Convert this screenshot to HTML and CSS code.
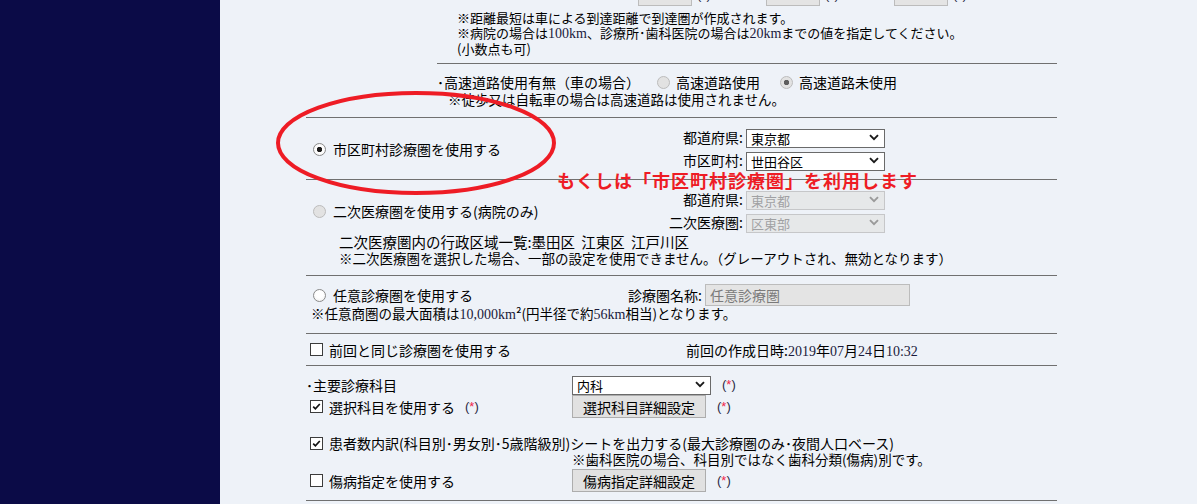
FILE: index.html
```html
<!DOCTYPE html>
<html lang="ja">
<head>
  <meta charset="UTF-8" />
  <title>診療圏設定</title>
  <link rel="stylesheet" href="styles.css">
</head>
<body>
  <div class="page">
    <nav class="sidebar"></nav>

    <main class="content">
      <div class="form">

        <!-- 到達距離 -->
        <div class="block sub">
          <div class="dist-row">
            <span class="dist-item"><span class="box"></span><span class="req">(<b>*</b>)</span></span>
            <span class="dist-item"><span class="box"></span><span class="req">(<b>*</b>)</span></span>
            <span class="dist-item"><span class="box"></span><span class="req">(<b>*</b>)</span></span>
          </div>
          <div class="notes">
            <p>※距離最短は車による到達距離で到達圏が作成されます。</p>
            <p>※病院の場合は<span class="num">100km</span>、診療所･歯科医院の場合は<span class="num">20km</span>までの値を指定してください。</p>
            <p>(小数点も可)</p>
          </div>
        </div>

        <div class="block highway">
          <div class="hw-row">
            <span class="hw-title">･高速道路使用有無（車の場合）</span>
            <label class="opt"><span class="radio disabled"></span>高速道路使用</label>
            <label class="opt opt-next"><span class="radio disabled checked"></span>高速道路未使用</label>
          </div>
          <p class="hw-note">※徒歩又は自転車の場合は高速道路は使用されません。</p>
        </div>

        <!-- 市区町村診療圏 -->
        <div class="block area">
          <div class="area-row">
            <label class="choice"><span class="radio checked"></span>市区町村診療圏を使用する</label>
            <div class="fields">
              <label>都道府県:</label>
              <div class="select">
                <select><option>東京都</option></select>
                <svg class="chev" viewBox="0 0 10 7"><path d="M1 1.2 L5 5.2 L9 1.2" /></svg>
              </div>
              <label>市区町村:</label>
              <div class="select">
                <select><option>世田谷区</option></select>
                <svg class="chev" viewBox="0 0 10 7"><path d="M1 1.2 L5 5.2 L9 1.2" /></svg>
              </div>
            </div>
          </div>
        </div>

        <!-- 二次医療圏 -->
        <div class="block area area-second">
          <div class="area-row">
            <label class="choice"><span class="radio disabled"></span>二次医療圏を使用する(病院のみ)</label>
            <div class="fields">
              <label>都道府県:</label>
              <div class="select disabled">
                <select disabled><option>東京都</option></select>
                <svg class="chev" viewBox="0 0 10 7"><path d="M1 1.2 L5 5.2 L9 1.2" /></svg>
              </div>
              <label>二次医療圏:</label>
              <div class="select disabled">
                <select disabled><option>区東部</option></select>
                <svg class="chev" viewBox="0 0 10 7"><path d="M1 1.2 L5 5.2 L9 1.2" /></svg>
              </div>
            </div>
          </div>
          <div class="area-notes">
            <p class="area-list">二次医療圏内の行政区域一覧:墨田区 江東区 江戸川区</p>
            <p>※二次医療圏を選択した場合、一部の設定を使用できません。（グレーアウトされ、無効となります）</p>
          </div>
        </div>

        <!-- 任意診療圏 -->
        <div class="block area-any">
          <div class="any-row">
            <label class="choice"><span class="radio"></span>任意診療圏を使用する</label>
            <label class="any-label">診療圏名称:</label>
            <input type="text" class="any-input" value="任意診療圏" disabled>
          </div>
          <p class="any-note">※任意商圏の最大面積は<span class="num">10,000km</span>²(円半径で約<span class="num">56km</span>相当)となります。</p>
        </div>

        <div class="block prev">
          <label class="check-choice"><span class="check"></span>前回と同じ診療圏を使用する</label>
          <span>前回の作成日時:<span class="num">2019</span>年<span class="num">07</span>月<span class="num">24</span>日<span class="num">10:32</span></span>
        </div>

        <!-- 診療科目 -->
        <div class="block subjects">
          <div class="row row-select">
            <span class="row-left">･主要診療科目</span>
            <div class="select">
              <select><option>内科</option></select>
              <svg class="chev" viewBox="0 0 10 7"><path d="M1 1.2 L5 5.2 L9 1.2" /></svg>
            </div>
            <span class="req req-side">(<b>*</b>)</span>
          </div>
          <div class="row row-button">
            <span class="row-left">
              <span class="check checked"><svg viewBox="0 0 13 13"><path d="M2.6 6.6 L5.2 9.3 L10.4 3.6" /></svg></span>選択科目を使用する<span class="req req-inline">(<b>*</b>)</span>
            </span>
            <button>選択科目詳細設定</button>
            <span class="req req-btn">(<b>*</b>)</span>
          </div>
          <div class="row row-text">
            <span class="check checked"><svg viewBox="0 0 13 13"><path d="M2.6 6.6 L5.2 9.3 L10.4 3.6" /></svg></span>患者数内訳(科目別･男女別･5歳階級別)シートを出力する(最大診療圏のみ･夜間人口ベース)
          </div>
          <div class="row row-note">※歯科医院の場合、科目別ではなく歯科分類(傷病)別です。</div>
          <div class="row row-last">
            <span class="row-left"><span class="check"></span>傷病指定を使用する</span>
            <button>傷病指定詳細設定</button>
            <span class="req req-btn">(<b>*</b>)</span>
          </div>
        </div>

        <!-- 注釈 -->
        <svg class="circle" viewBox="0 0 290 112"><ellipse cx="142" cy="55" rx="138" ry="50" /></svg>
        <p class="remark">もくしは「市区町村診療圏」を利用します</p>
      </div>
    </main>
  </div>
</body>
</html>
```

FILE: styles.css
```css
body {
  margin: 0;
  background: #eef2f8;
  font-family: "Noto Sans CJK JP", "Noto Sans", sans-serif;
  font-size: 14px;
  color: #000;
}

p {
  margin: 0;
}

.page {
  display: flex;
  min-height: 504px;
}

.sidebar {
  width: 220px;
  flex: none;
  background: #0b0b47;
}

.content {
  flex: 1;
  padding-left: 86px;
  overflow: hidden;
}

.form {
  position: relative;
  width: 751px;
}

.block {
  border-bottom: 1px solid #707070;
}

.num {
  font-family: "Liberation Serif", serif;
  font-size: 14px;
  color: #1a1a3c;
}

/* 到達距離 */
.sub {
  margin-left: 131px;
  display: flex;
  flex-direction: column;
  padding-bottom: 7px;
}

.dist-row {
  display: flex;
  height: 22px;
  margin: -16px 0 0 201px;
}

.dist-item {
  display: flex;
  width: 128px;
}

.box {
  width: 54px;
  height: 22px;
  box-sizing: border-box;
  background: #e4e4e4;
  border: 1px solid #bcbcbc;
}

.dist-item .req {
  margin-left: 5px;
  line-height: 22px;
}

.notes {
  margin-top: 4px;
  padding-left: 20px;
  font-size: 13px;
  line-height: 15px;
}

.highway {
  padding: 9px 0 10px 131px;
}

.hw-row {
  display: flex;
  align-items: center;
  height: 18px;
}

.hw-title {
  width: 220px;
}

.opt {
  display: flex;
  align-items: center;
}

.opt .radio {
  margin-right: 6px;
}

.opt-next {
  margin-left: 20px;
}

.hw-note {
  padding-left: 11px;
  font-size: 13.5px;
  line-height: 16px;
}

/* ラジオ・チェック */
.radio {
  display: inline-block;
  flex: none;
  width: 13px;
  height: 13px;
  box-sizing: border-box;
  border-radius: 50%;
  border: 1px solid #8a8a8a;
  background: radial-gradient(circle at 50% 40%, #ffffff 40%, #ececec 100%);
}

.radio.checked {
  background: radial-gradient(circle, #1c1c1c 0, #1c1c1c 2.4px, #ffffff 3px, #f2f2f2 100%);
}

.radio.disabled {
  border-color: #bcbcbc;
  background: #e2e2e2;
}

.radio.disabled.checked {
  background: radial-gradient(circle, #5e5e5e 0, #5e5e5e 2.4px, #e2e2e2 3px);
}

.check {
  display: inline-flex;
  flex: none;
  width: 13px;
  height: 13px;
  box-sizing: border-box;
  margin-right: 6px;
  border: 1px solid #3c3c3c;
  background: #fff;
}

.check svg {
  width: 11px;
  height: 11px;
  fill: none;
  stroke: #111;
  stroke-width: 2;
}

/* セレクト */
.select {
  position: relative;
  width: 139px;
  height: 19px;
}

.select select {
  width: 100%;
  height: 19px;
  box-sizing: border-box;
  appearance: none;
  margin: 0;
  padding: 0 0 0 4px;
  border: 1px solid #6a6a6a;
  border-radius: 0;
  background: #fff;
  color: #000;
  font-family: inherit;
  font-size: 13px;
  line-height: 17px;
}

.chev {
  position: absolute;
  right: 6px;
  top: 6px;
  width: 10px;
  height: 7px;
  fill: none;
  stroke: #1a1a1a;
  stroke-width: 1.9;
  pointer-events: none;
}

.select.disabled select {
  background: #e4e4e4;
  border-color: #b6b6b6;
  color: #808080;
}

.select.disabled .chev {
  stroke: #9a9a9a;
}

/* 市区町村・二次医療圏 */
.area {
  padding: 10px 0 9px;
}

.area-row {
  display: flex;
  align-items: center;
}

.choice {
  display: flex;
  align-items: center;
  width: 340px;
  flex: none;
  box-sizing: border-box;
  padding-left: 7px;
}

.choice .radio {
  margin-right: 7px;
}

.fields {
  display: grid;
  grid-template-columns: 97px 139px;
  column-gap: 3px;
  row-gap: 4px;
  align-items: center;
}

.fields label {
  text-align: right;
  line-height: 19px;
}

.area-notes {
  margin-top: 2px;
  padding-left: 33px;
  font-size: 13.5px;
  line-height: 16px;
}

.area-list {
  font-size: 14.5px;
  word-spacing: 3px;
}

/* 任意診療圏 */
.area-any {
  padding: 8px 0 11px;
}

.any-row {
  display: flex;
  align-items: center;
  height: 22px;
}

.any-row .choice {
  width: 300px;
}

.any-label {
  width: 96px;
  text-align: right;
}

.any-input {
  width: 205px;
  height: 22px;
  box-sizing: border-box;
  margin: 0 0 0 3px;
  padding: 0 4px;
  border: 1px solid #bcbcbc;
  background: #e4e4e4;
  color: #7a7a7a;
  font-family: inherit;
  font-size: 14px;
}

.any-note {
  padding-left: 5px;
  font-size: 13.5px;
  line-height: 14px;
}

/* 前回 */
.prev {
  display: flex;
  align-items: center;
  height: 31px;
}

.check-choice {
  display: flex;
  align-items: center;
  width: 380px;
  box-sizing: border-box;
  padding-left: 4px;
}

/* 診療科目 */
.subjects {
  padding: 9px 0 8px;
}

.row {
  display: flex;
  align-items: center;
}

.row-left {
  display: flex;
  align-items: center;
  width: 266px;
  flex: none;
}

.row-button .row-left,
.row-last .row-left,
.row-text {
  box-sizing: border-box;
  padding-left: 4px;
}

.row-select {
  height: 19px;
}

.row-button {
  height: 23px;
  margin-top: 1px;
}

.row-text {
  height: 16px;
  margin-top: 17px;
}

.row-note {
  height: 16px;
  padding-left: 266px;
  font-size: 13.5px;
}

.row-last {
  height: 23px;
  margin-top: 2px;
}

button {
  width: 134px;
  height: 23px;
  margin: 0;
  padding: 0;
  border: 1px solid #adadad;
  border-radius: 0;
  background: #e1e1e1;
  color: #000;
  font-family: inherit;
  font-size: 14px;
}

.req {
  font-family: "Liberation Sans", sans-serif;
  font-size: 13px;
  color: #2a2a44;
}

.req b {
  font-weight: normal;
  color: #f0264a;
}

.req-side {
  margin-left: 11px;
}

.req-inline {
  margin-left: 10px;
}

.req-btn {
  margin-left: 11px;
}

/* 注釈 */
.circle {
  position: absolute;
  left: -32px;
  top: 88px;
  width: 290px;
  height: 112px;
  fill: none;
  stroke: #ee1c25;
  stroke-width: 4;
}

.remark {
  position: absolute;
  left: 251px;
  top: 169px;
  font-size: 18px;
  line-height: 22px;
  font-weight: bold;
  letter-spacing: 1px;
  color: #ee1c25;
}
```
